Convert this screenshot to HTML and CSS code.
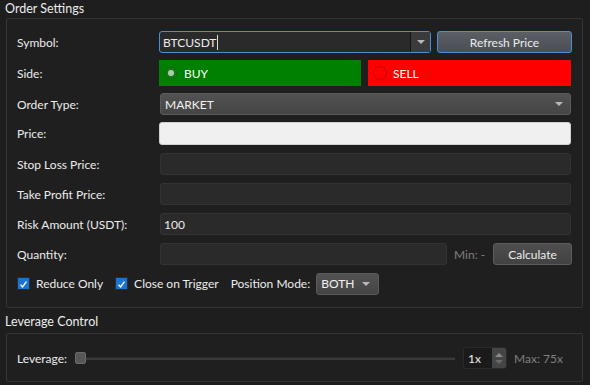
FILE: index.html
```html
<!DOCTYPE html>
<html>
<head>
<meta charset="utf-8">
<link rel="stylesheet" href="styles.css">
</head>
<body>
<div class="title">Order Settings</div>
<div class="group order">
  <div class="row r22">
    <div class="label">Symbol:</div>
    <div class="combo edit focus">
      <div class="combo-text">BTCUSDT<span class="caret"></span></div>
      <div class="combo-btn"><span class="arrow"></span></div>
    </div>
    <div class="btn refresh">Refresh Price</div>
  </div>
  <div class="row r26">
    <div class="label">Side:</div>
    <div class="side buy"><span class="radio checked"></span>BUY</div>
    <div class="side sell"><span class="radio"></span>SELL</div>
  </div>
  <div class="row r22">
    <div class="label">Order Type:</div>
    <div class="combo select full"><span class="combo-val">MARKET</span><span class="arrow"></span></div>
  </div>
  <div class="row r23">
    <div class="label">Price:</div>
    <div class="input light"></div>
  </div>
  <div class="row r22">
    <div class="label">Stop Loss Price:</div>
    <div class="input"></div>
  </div>
  <div class="row r22">
    <div class="label">Take Profit Price:</div>
    <div class="input"></div>
  </div>
  <div class="row r22">
    <div class="label">Risk Amount (USDT):</div>
    <div class="input"><span class="val">100</span></div>
  </div>
  <div class="row r22">
    <div class="label">Quantity:</div>
    <div class="input qty"></div>
    <div class="muted minlbl">Min: -</div>
    <div class="btn calc">Calculate</div>
  </div>
  <div class="row r21 checks">
    <span class="cb"><svg viewBox="0 0 13 13" width="13" height="13"><path d="M3 6.8 L5.4 9.4 L10 3.2" fill="none" stroke="#fff" stroke-width="1.6"/></svg></span>
    <span class="cbl">Reduce Only</span>
    <span class="cb"><svg viewBox="0 0 13 13" width="13" height="13"><path d="M3 6.8 L5.4 9.4 L10 3.2" fill="none" stroke="#fff" stroke-width="1.6"/></svg></span>
    <span class="cbl">Close on Trigger</span>
    <span class="pm">Position Mode:</span>
    <div class="combo select both"><span class="combo-val">BOTH</span><span class="arrow"></span></div>
  </div>
</div>
<div class="title t2">Leverage Control</div>
<div class="group lev">
  <div class="levrow">
    <div class="label short">Leverage:</div>
    <div class="slider"><span class="handle"></span><span class="track"></span></div>
    <div class="spin">
      <div class="spin-text">1x</div>
      <div class="spin-btns"><span class="up"></span><span class="down"></span></div>
    </div>
    <div class="muted maxlbl">Max: 75x</div>
  </div>
</div>
</body>
</html>
```
FILE: styles.css
```css
* { box-sizing: border-box; }
html, body { margin: 0; padding: 0; }
body {
  width: 590px;
  height: 385px;
  background: #1e1e1e;
  color: #ececec;
  font-family: "Lato", "Liberation Sans", sans-serif;
  font-size: 12px;
  overflow: hidden;
}
.title {
  height: 18px;
  line-height: 17px;
  padding-left: 5px;
  font-size: 12.5px;
}
.t2 {
  height: 25px;
  line-height: 27px;
}
.group {
  margin-left: 6px;
  width: 577px;
  border: 1px solid #353535;
  border-radius: 2px;
  background: #1f1f1f;
}
.order {
  height: 290px;
  padding: 12px 10px 0 10px;
  display: flex;
  flex-direction: column;
}
.row {
  display: flex;
  align-items: center;
  margin-bottom: 8px;
}
.r22 { height: 22px; }
.r23 { height: 23px; }
.r26 { height: 26px; margin-bottom: 7px; }
.r21 { height: 21px; }
.row:first-child { margin-bottom: 7px; }
.row:nth-child(3) { margin-bottom: 7px; }
.label {
  width: 142px;
  flex: none;
}
.combo {
  display: flex;
  align-items: center;
  border-radius: 3px;
}
.edit {
  width: 272px;
  height: 22px;
  background: #2a2a2a;
  border: 1px solid #4a90d9;
}
.combo-text {
  flex: 1;
  padding-left: 3px;
  display: flex;
  align-items: center;
}
.caret {
  display: inline-block;
  width: 1px;
  height: 15px;
  background: #ddd;
  margin-left: 1px;
}
.combo-btn {
  width: 20px;
  height: 100%;
  background: #3b3b3b;
  border-left: 1px solid #161616;
  display: flex;
  align-items: center;
  justify-content: center;
}
.arrow {
  width: 0;
  height: 0;
  border-left: 4px solid transparent;
  border-right: 4px solid transparent;
  border-top: 4px solid #b8b8b8;
}
.btn {
  display: flex;
  align-items: center;
  justify-content: center;
  border-radius: 3px;
  height: 22px;
}
.refresh {
  margin-left: 6px;
  width: 135px;
  background: linear-gradient(#5b5f66, #4b4e54);
  border: 1px solid #4a90d9;
}
.side {
  height: 26px;
  display: flex;
  align-items: center;
  color: #fff;
}
.buy {
  width: 202px;
  background: #008000;
  padding-left: 6px;
}
.sell {
  width: 203px;
  margin-left: 7px;
  background: #ff0000;
  padding-left: 5px;
}
.radio {
  flex: none;
  width: 12px;
  height: 12px;
  border-radius: 50%;
  margin-right: 7px;
  display: inline-flex;
  align-items: center;
  justify-content: center;
}
.buy .radio {
  border: 1px solid #0b6b0b;
  background: #1a781a;
}
.buy .radio::after {
  content: "";
  width: 6px;
  height: 6px;
  border-radius: 50%;
  background: #a9cfa9;
}
.sell .radio {
  width: 14px;
  height: 14px;
  border: 1px solid #c40000;
  background: #ff0000;
  margin-right: 6px;
}
.select {
  height: 22px;
  background: linear-gradient(#525252, #454545);
  border: 1px solid #5a5a5a;
  justify-content: space-between;
  padding: 0 5px 0 4px;
}
.select .arrow { margin-right: 2px; }
.full { width: 411px; margin-left: 1px; }
.combo-val { color: #f2f2f2; }
.input {
  height: 22px;
  width: 411px;
  margin-left: 1px;
  background: #2a2a2a;
  border: 1px solid #333;
  border-radius: 3px;
  display: flex;
  align-items: center;
  padding-left: 3px;
}
.input.light {
  height: 23px;
  width: 412px;
  margin-left: 0;
  background: #f0f0f0;
  border: 1px solid #d0d0d0;
}
.qty { width: 287px; }
.muted { color: #7f7f7f; }
.minlbl { margin-left: 7px; width: 39px; }
.calc {
  width: 79px;
  height: 22px;
  background: linear-gradient(#4e4e4e, #424242);
  border: 1px solid #5c5c5c;
}
.checks { margin-bottom: 0; margin-top: 0; }
.cb {
  width: 13px;
  height: 13px;
  background: #1a74d0;
  border: 1px solid #2c2c2c;
  display: inline-flex;
  flex: none;
}
.cb svg { display: block; }
.cbl { margin-left: 6px; margin-right: 12px; }
.pm { margin-left: 0; }
.both {
  width: 63px;
  margin-left: 6px;
  padding-right: 6px;
}
.lev {
  height: 49px;
  padding: 0 10px;
  display: flex;
  align-items: center;
}
.levrow {
  display: flex;
  align-items: center;
  width: 100%;
  margin-top: 1px;
}
.label.short { width: 58px; }
.slider {
  display: flex;
  align-items: center;
  width: 380px;
  position: relative;
}
.handle {
  width: 11px;
  height: 12px;
  border-radius: 2px;
  background: #575757;
  border: 1px solid #6a6a6a;
  flex: none;
}
.track {
  height: 3px;
  width: 369px;
  background: #3a3a3a;
  border-top: 1px solid #2a2a2a;
}
.spin {
  margin-left: 8px;
  width: 44px;
  height: 22px;
  border-radius: 3px;
  border: 1px solid #2a2a2a;
  display: flex;
  overflow: hidden;
}
.spin-text {
  flex: 1;
  background: #1a1a1a;
  padding-left: 4px;
  display: flex;
  align-items: center;
}
.spin-btns {
  width: 14px;
  background: #454545;
  display: flex;
  flex-direction: column;
  align-items: center;
  justify-content: center;
  gap: 3px;
}
.up, .down {
  width: 0;
  height: 0;
  border-left: 4px solid transparent;
  border-right: 4px solid transparent;
}
.up { border-bottom: 4px solid #8a8a8a; }
.down { border-top: 4px solid #6a6a6a; }
.maxlbl { margin-left: 7px; }
```
